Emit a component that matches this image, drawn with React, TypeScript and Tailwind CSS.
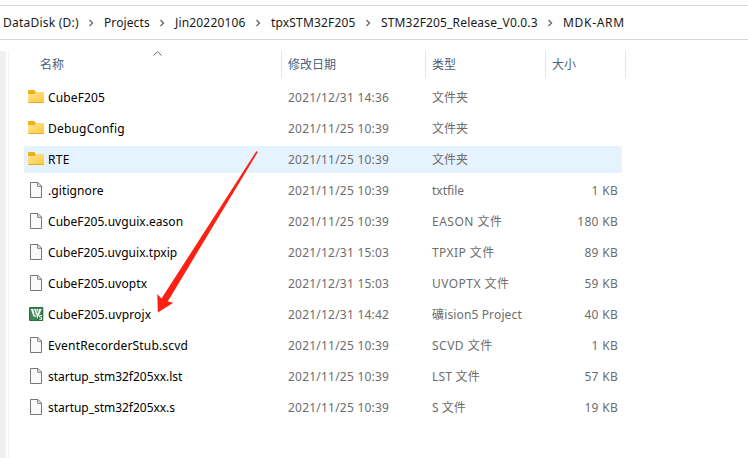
import React from "react";

type Kind = "folder" | "file" | "keil";

interface Entry {
  name: string;
  kind: Kind;
  date: string;
  type: string;
  size?: string;
  nameTracking?: string;
  typeTracking?: string;
  active?: boolean;
}

const crumbs = [
  { label: "DataDisk (D:)", style: "w-[101px] tracking-[0.23px]" },
  { label: "Projects", style: "w-[71px] tracking-[0.1px]" },
  { label: "Jin20220106", style: "w-[96px] tracking-[0.17px]" },
  { label: "tpxSTM32F205", style: "w-[110px] tracking-[0.17px]" },
  { label: "STM32F205_Release_V0.0.3", style: "w-[182px] tracking-[0.16px]" },
  { label: "MDK-ARM", style: "w-[80px] tracking-[0.7px]" },
];

const entries: Entry[] = [
  { name: "CubeF205", kind: "folder", date: "2021/12/31 14:36", type: "文件夹", nameTracking: "tracking-[0.14px]" },
  { name: "DebugConfig", kind: "folder", date: "2021/11/25 10:39", type: "文件夹", nameTracking: "tracking-[0.2px]" },
  { name: "RTE", kind: "folder", date: "2021/11/25 10:39", type: "文件夹", nameTracking: "tracking-[0.3px]", active: true },
  { name: ".gitignore", kind: "file", date: "2021/11/25 10:39", type: "txtfile", size: "1 KB", nameTracking: "tracking-[0.1px]" },
  { name: "CubeF205.uvguix.eason", kind: "file", date: "2021/11/25 10:39", type: "EASON 文件", size: "180 KB", nameTracking: "tracking-[0.05px]", typeTracking: "tracking-[0.5px]" },
  { name: "CubeF205.uvguix.tpxip", kind: "file", date: "2021/12/31 15:03", type: "TPXIP 文件", size: "89 KB", nameTracking: "tracking-[0.04px]", typeTracking: "tracking-[0.45px]" },
  { name: "CubeF205.uvoptx", kind: "file", date: "2021/12/31 15:03", type: "UVOPTX 文件", size: "59 KB", nameTracking: "tracking-[0.07px]", typeTracking: "tracking-[0.45px]" },
  { name: "CubeF205.uvprojx", kind: "keil", date: "2021/12/31 14:42", type: "礦ision5 Project", size: "40 KB", nameTracking: "tracking-[0.1px]", typeTracking: "tracking-[0.14px]" },
  { name: "EventRecorderStub.scvd", kind: "file", date: "2021/11/25 10:39", type: "SCVD 文件", size: "1 KB", nameTracking: "tracking-[0.17px]", typeTracking: "tracking-[0.5px]" },
  { name: "startup_stm32f205xx.lst", kind: "file", date: "2021/11/25 10:39", type: "LST 文件", size: "57 KB", nameTracking: "tracking-[-0.03px]", typeTracking: "tracking-[0.2px]" },
  { name: "startup_stm32f205xx.s", kind: "file", date: "2021/11/25 10:39", type: "S 文件", size: "19 KB", nameTracking: "tracking-[-0.03px]" },
];

function FolderIcon() {
  return (
    <svg width="16" height="17" viewBox="0 0 16 17">
      <defs>
        <linearGradient id="folder" x1="0" y1="0" x2="1" y2="1">
          <stop offset="0" stopColor="#ffe598" />
          <stop offset="1" stopColor="#fdc938" />
        </linearGradient>
      </defs>
      <path d="M0 2.4Q0 1 1.4 1H5.4Q6.2 1 6.8 1.8L8.2 3.2V6H0Z" fill="#f3ae0f" />
      <path d="M0 5H5.6Q6.3 5 6.8 4.4L7.6 3.4Q8 3 8.6 3H15Q16 3 16 4V12.8Q16 14 14.8 14H1.2Q0 14 0 12.8Z" fill="url(#folder)" />
      <path d="M.6 13.5H15.4" stroke="#e9a825" />
    </svg>
  );
}

function FileIcon() {
  return (
    <svg width="16" height="17" viewBox="0 0 16 17">
      <path d="M2.5.5H10L13.5 4V15.5H2.5Z" fill="#fafafa" stroke="#777" />
      <path d="M9.7.5V4.3H13.5" fill="none" stroke="#777" />
    </svg>
  );
}

function KeilIcon() {
  return (
    <svg width="16" height="17" viewBox="0 0 16 17">
      <rect x="1" y="1" width="14.3" height="14" rx="1" fill="#2b6e42" />
      <path d="M2 2H14.3V7L8 14H2Z" fill="#3e8758" />
      <path d="M2.8 3H5.2L7 10.5H5.5Z M6 3H8.2L8.8 6.5L7.8 8Z M9 3H10.6L9.6 6.5Z M11.3 3H13.6L10.4 10.5H8.6L8 7.5L9 6.5L9.6 8Z" fill="#f4faf5" />
      <path d="M7.2 9.5V11M9.4 9.5V12.4" stroke="#f4faf5" strokeWidth="1" />
      <path d="M14 9.5H11.7V11.4H13.6V13.4H11.3" fill="none" stroke="#f4faf5" />
    </svg>
  );
}

function EntryIcon({ kind }: { kind: Kind }) {
  if (kind === "folder") return <FolderIcon />;
  if (kind === "keil") return <KeilIcon />;
  return <FileIcon />;
}

function Row({ entry }: { entry: Entry }) {
  return (
    <div
      className={`flex h-[27px] w-[598px] items-center rounded-xs pl-1 text-[#6d6d6d] ${
        entry.active ? "bg-[#e5f3ff]" : ""
      }`}
    >
      <div className="flex w-[260px] items-center gap-1 text-black">
        <EntryIcon kind={entry.kind} />
        <span className={entry.nameTracking}>{entry.name}</span>
      </div>
      <span className="w-36 tracking-[0.22px]">{entry.date}</span>
      <span className={`w-[120px] ${entry.typeTracking ?? ""}`}>{entry.type}</span>
      <span className="w-[66px] text-right tracking-[0.3px]">{entry.size}</span>
    </div>
  );
}

export default function App() {
  return (
    <div className="relative flex h-[458px] w-[748px] flex-col overflow-hidden bg-white pt-[5px] font-['Noto_Sans','Noto_Sans_CJK_SC',sans-serif] text-[12px] leading-[18px] whitespace-nowrap">
      <nav className="flex h-[35px] items-center border-y border-[#d9d9d9] pl-[3px] text-[#191919]">
        {crumbs.map((c, i) => (
          <div key={c.label} className={`flex items-center justify-between pr-[9px] ${c.style}`}>
            <span>{c.label}</span>
            {i < crumbs.length - 1 && (
              <svg width="6" height="8" viewBox="0 0 6 8" className="mr-px shrink-0">
                <path d="M1.5 1L4.5 4L1.5 7" fill="none" stroke="#666" strokeWidth="1.3" />
              </svg>
            )}
          </div>
        ))}
      </nav>
      <div className="mt-[11px] flex flex-1">
        <div className="w-1.5 bg-[#f0f0f0]" />
        <div className="ml-0.5 w-px bg-[#f5f5f5]" />
        <main className="pl-[15px]">
          <header className="flex h-[27px] items-center text-[#4c607a]">
            <div className="relative flex h-full w-[258px] items-center border-r border-[#e5e5e5] pl-4">
              名称
              <svg width="9" height="5" viewBox="0 0 9 5" className="absolute top-0 left-[129px]">
                <path d="M.5 4.5L4.5.7L8.5 4.5" fill="none" stroke="#666" />
              </svg>
            </div>
            <div className="flex h-full w-36 items-center border-r border-[#e5e5e5] pl-1.5">修改日期</div>
            <div className="flex h-full w-[120px] items-center border-r border-[#e5e5e5] pl-1.5">类型</div>
            <div className="flex h-full w-20 items-center border-r border-[#e5e5e5] pl-1.5">大小</div>
          </header>
          <div className="mt-1.5 flex flex-col gap-1">
            {entries.map((e) => (
              <Row key={e.name} entry={e} />
            ))}
          </div>
        </main>
      </div>
      <svg width="106" height="164" viewBox="0 0 106 164" className="absolute top-[150px] left-[155px]">
        <path d="M101.5 1L102.8 2L12.7 151.5L18.3 152.8L2.8 162.5L2.3 144L6.5 148.5Z" fill="#fe2012" />
      </svg>
    </div>
  );
}
